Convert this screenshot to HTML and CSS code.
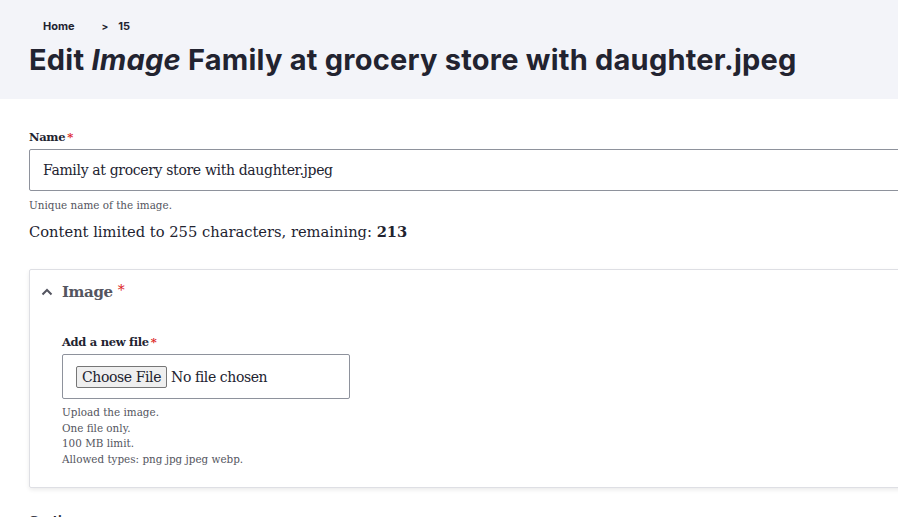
FILE: index.html
```html
<!DOCTYPE html>
<html lang="en">
<head>
<meta charset="utf-8">
<title>Edit Image</title>
<link rel="stylesheet" href="styles.css">
</head>
<body>
<header class="page-header">
  <nav class="breadcrumb">
    <a class="crumb" href="#">Home</a>
    <span class="sep">&gt;</span>
    <span class="crumb">15</span>
  </nav>
  <h1 class="page-title">Edit <em>Image</em> Family at grocery store with daughter.jpeg</h1>
</header>
<main class="content">
  <div class="form-item">
    <label class="label">Name<span class="req">*</span></label>
    <div class="text-input">Family at grocery store with daughter.jpeg</div>
    <div class="description">Unique name of the image.</div>
    <div class="counter">Content limited to 255 characters, remaining: <strong>213</strong></div>
  </div>
  <section class="details">
    <div class="summary">
      <svg class="chev" width="12" height="8" viewBox="0 0 12 8"><path d="M1.5 6.5 L6 2 L10.5 6.5" fill="none" stroke="#545560" stroke-width="2"/></svg>
      <span class="summary-text">Image</span><span class="req-big">*</span>
    </div>
    <div class="details-body">
      <label class="label">Add a new file<span class="req">*</span></label>
      <div class="file-box">
        <span class="file-btn">Choose File</span><span class="file-none">No file chosen</span>
      </div>
      <div class="description lines">
        <div>Upload the image.</div>
        <div>One file only.</div>
        <div>100 MB limit.</div>
        <div>Allowed types: png jpg jpeg webp.</div>
      </div>
    </div>
  </section>
  <label class="label caption">Caption</label>
</main>
</body>
</html>
```
FILE: styles.css
```css
html, body {
  margin: 0;
  padding: 0;
  overflow: hidden;
  background: #ffffff;
  color: #222330;
  font-family: "DejaVu Serif", serif;
}
.page-header {
  background: #f3f4f9;
  padding: 18px 29px 0;
  height: 81px;
}
.breadcrumb {
  display: flex;
  align-items: center;
  font-family: "Inter", "Liberation Sans", sans-serif;
  font-weight: 700;
  font-size: 11px;
  height: 16px;
  padding-left: 14px;
}
.crumb { color: #222330; text-decoration: none; }
.sep { margin: 0 10px 0 27px; font-size: 10px; }
.page-title {
  margin: 8px 0 0;
  font-family: "Inter", "Liberation Sans", sans-serif;
  font-weight: 700;
  font-size: 29px;
  line-height: 36px;
  letter-spacing: 0.23px;
  color: #222330;
}
.page-title em { font-style: italic; }
.content {
  padding: 29px 0 0 29px;
  width: 1000px;
}
.label {
  display: block;
  font-weight: 700;
  font-size: 11.5px;
  letter-spacing: -0.3px;
  line-height: 18px;
  color: #222330;
}
.req { color: #dc2323; margin-left: 2px; }
.text-input {
  margin-top: 3px;
  height: 40px;
  border: 1px solid #8e929c;
  border-radius: 2px;
  box-sizing: content-box;
  padding: 0 13px;
  display: flex;
  align-items: center;
  font-size: 14px;
  letter-spacing: -0.34px;
}
.description {
  font-size: 10.4px;
  color: #545560;
  margin-top: 6px;
  line-height: 16px;
}
.counter {
  font-size: 14.7px;
  margin-top: 10px;
  line-height: 18px;
}
.details {
  margin-top: 28px;
  border: 1px solid #dedfe4;
  border-radius: 2px;
  box-shadow: 0 2px 4px rgba(0,0,0,0.08);
  height: 217px;
}
.summary {
  display: flex;
  align-items: center;
  height: 44px;
  padding-left: 11px;
  color: #545560;
}
.chev { margin-right: 9px; }
.summary-text { font-size: 15px; font-weight: 700; letter-spacing: -0.4px; }
.req-big { color: #dc2323; font-size: 14px; align-self: flex-start; margin-top: 12px; margin-left: 5px; }
.details-body { padding: 19px 0 0 32px; }
.file-box {
  margin-top: 3px;
  height: 45px;
  border: 1px solid #8e929c;
  border-radius: 2px;
  display: flex;
  align-items: center;
  padding-left: 13px;
  box-sizing: border-box;
  font-size: 14px;
  letter-spacing: -0.4px;
  width: 288px;
}
.file-btn {
  border: 1px solid #767676;
  background: #efefef;
  border-radius: 2px;
  padding: 2px 5px;
  margin-right: 4px;
  font-size: 14px;
}
.lines { margin-top: 6px; line-height: 15.5px; }
.caption { margin-top: 23px; }
```
